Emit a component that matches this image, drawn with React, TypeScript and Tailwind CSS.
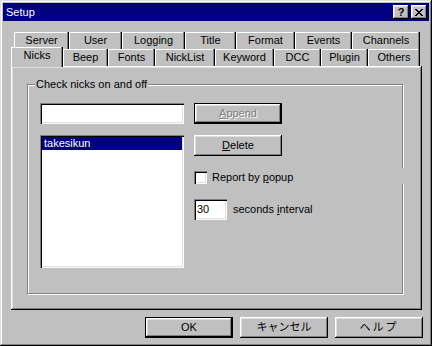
import React from "react";

const raised =
  "shadow-[inset_-1px_-1px_#000,inset_1px_1px_#fff,inset_-2px_-2px_#808080,inset_2px_2px_#dfdfdf]";
const sunken =
  "shadow-[inset_1px_1px_#808080,inset_2px_2px_#000,inset_-1px_-1px_#fff,inset_-2px_-2px_#dfdfdf]";
const defaultBtn =
  "shadow-[inset_0_0_0_1px_#000,inset_-2px_-2px_#000,inset_2px_2px_#fff,inset_-3px_-3px_#808080,inset_3px_3px_#dfdfdf]";

const topTabs = [
  { label: "Server", w: "w-[55px]" },
  { label: "User", w: "w-[53px]" },
  { label: "Logging", w: "w-[63px]" },
  { label: "Title", w: "w-[51px]" },
  { label: "Format", w: "w-[59px]" },
  { label: "Events", w: "w-[57px]" },
  { label: "Channels", w: "w-[68px]" },
];

const frontTabs = [
  { label: "Nicks", w: "w-[52px]", selected: true },
  { label: "Beep", w: "w-[45px]" },
  { label: "Fonts", w: "w-[47px]" },
  { label: "NickList", w: "w-[60px]" },
  { label: "Keyword", w: "w-[59px]" },
  { label: "DCC", w: "w-[47px]" },
  { label: "Plugin", w: "w-[47px]" },
  { label: "Others", w: "w-[52px]" },
];

function Tab({ label, w, selected }: { label: string; w: string; selected?: boolean }) {
  return (
    <div
      className={`${w} flex items-center justify-center bg-[#c0c0c0] shadow-[inset_-1px_0_#000,inset_-2px_0_#808080,inset_1px_1px_#fff] ${
        selected ? "relative z-10 h-[20px] -mb-px pb-[3px]" : "h-[17px]"
      }`}
    >
      {label}
    </div>
  );
}

function CloseGlyph() {
  const px: [number, number][] = [];
  for (let i = 0; i < 7; i++) {
    px.push([i, i], [i + 1, i], [6 - i, i], [7 - i, i]);
  }
  return (
    <svg width="8" height="7" viewBox="0 0 8 7" shapeRendering="crispEdges">
      {px.map(([x, y], i) => (
        <rect key={i} x={x} y={y} width="1" height="1" fill="#000" />
      ))}
    </svg>
  );
}

export default function App() {
  return (
    <div className="w-[432px] h-[346px] bg-[#c0c0c0] p-[3px] flex flex-col text-[11px] leading-[13px] text-black font-['Liberation_Sans','Noto_Sans_CJK_JP',sans-serif] shadow-[inset_-1px_-1px_#000,inset_1px_1px_#dfdfdf,inset_-2px_-2px_#808080,inset_2px_2px_#fff]">
      {/* title bar */}
      <div className="h-[18px] bg-[#000080] flex items-center justify-between pl-[3px] pr-[2px]">
        <span className="text-white">Setup</span>
        <div className="flex gap-[2px]">
          <div className={`w-[16px] h-[14px] bg-[#c0c0c0] flex items-center justify-center font-bold text-[11px] ${raised}`}>
            ?
          </div>
          <div className={`w-[16px] h-[14px] bg-[#c0c0c0] flex items-center justify-center ${raised}`}>
            <CloseGlyph />
          </div>
        </div>
      </div>

      {/* tabs */}
      <div className="mt-[11px] pl-[11px] flex">
        {topTabs.map((t) => (
          <Tab key={t.label} {...t} />
        ))}
      </div>
      <div className="pl-[8px] flex items-end h-[17px]">
        {frontTabs.map((t) => (
          <Tab key={t.label} {...t} />
        ))}
      </div>

      {/* panel */}
      <div className="ml-[8px] w-[411px] h-[244px] pt-[18px] pl-[16px] shadow-[inset_-1px_-1px_#000,inset_1px_1px_#fff,inset_-2px_-2px_#808080,inset_2px_2px_#dfdfdf]">
        <div className="relative w-[376px] h-[210px] border border-[#808080] shadow-[inset_1px_1px_#fff,1px_1px_#fff] pl-[12px] pt-[18px] flex gap-[10px]">
          <span className="absolute left-[7px] -top-[7px] px-[1px] bg-[#c0c0c0]">Check nicks on and off</span>
          {/* redraw gap in the etched edge */}
          <span className="absolute -right-[2px] top-[83px] w-[2px] h-[16px] bg-[#c0c0c0]" />

          <div className="flex flex-col gap-[11px]">
            <div className={`w-[144px] h-[21px] bg-white ${sunken}`} />
            <div className={`w-[144px] h-[133px] bg-white p-[2px] ${sunken}`}>
              <div className="h-[13px] bg-[#000080] text-white pl-[2px] flex items-center">takesikun</div>
            </div>
          </div>

          <div className="flex flex-col">
            <div className={`w-[88px] h-[21px] flex items-center justify-center text-[#808080] [text-shadow:1px_1px_#fff] ${defaultBtn}`}>
              <span>
                <span className="underline">A</span>ppend
              </span>
            </div>
            <div className={`mt-[11px] w-[88px] h-[21px] flex items-center justify-center ${raised}`}>
              <span>
                <span className="underline">D</span>elete
              </span>
            </div>
            <div className="mt-[15px] flex items-center gap-[5px] h-[13px]">
              <div className={`w-[13px] h-[13px] bg-white ${sunken}`} />
              <span>
                Report by <span className="underline">p</span>opup
              </span>
            </div>
            <div className="mt-[15px] flex items-center gap-[6px]">
              <div className={`w-[33px] h-[21px] bg-white pl-[3px] flex items-center ${sunken}`}>30</div>
              <span>
                seconds <span className="underline">i</span>nterval
              </span>
            </div>
          </div>
        </div>
      </div>

      {/* dialog buttons */}
      <div className="mt-[7px] pr-[6px] flex justify-end gap-[7px]">
        <div className={`w-[88px] h-[21px] flex items-center justify-center ${defaultBtn}`}>OK</div>
        <div className={`w-[88px] h-[21px] flex items-center justify-center ${raised}`}>キャンセル</div>
        <div className={`w-[88px] h-[21px] flex items-center justify-center tracking-[2px] ${raised}`}>ヘルプ</div>
      </div>
    </div>
  );
}
